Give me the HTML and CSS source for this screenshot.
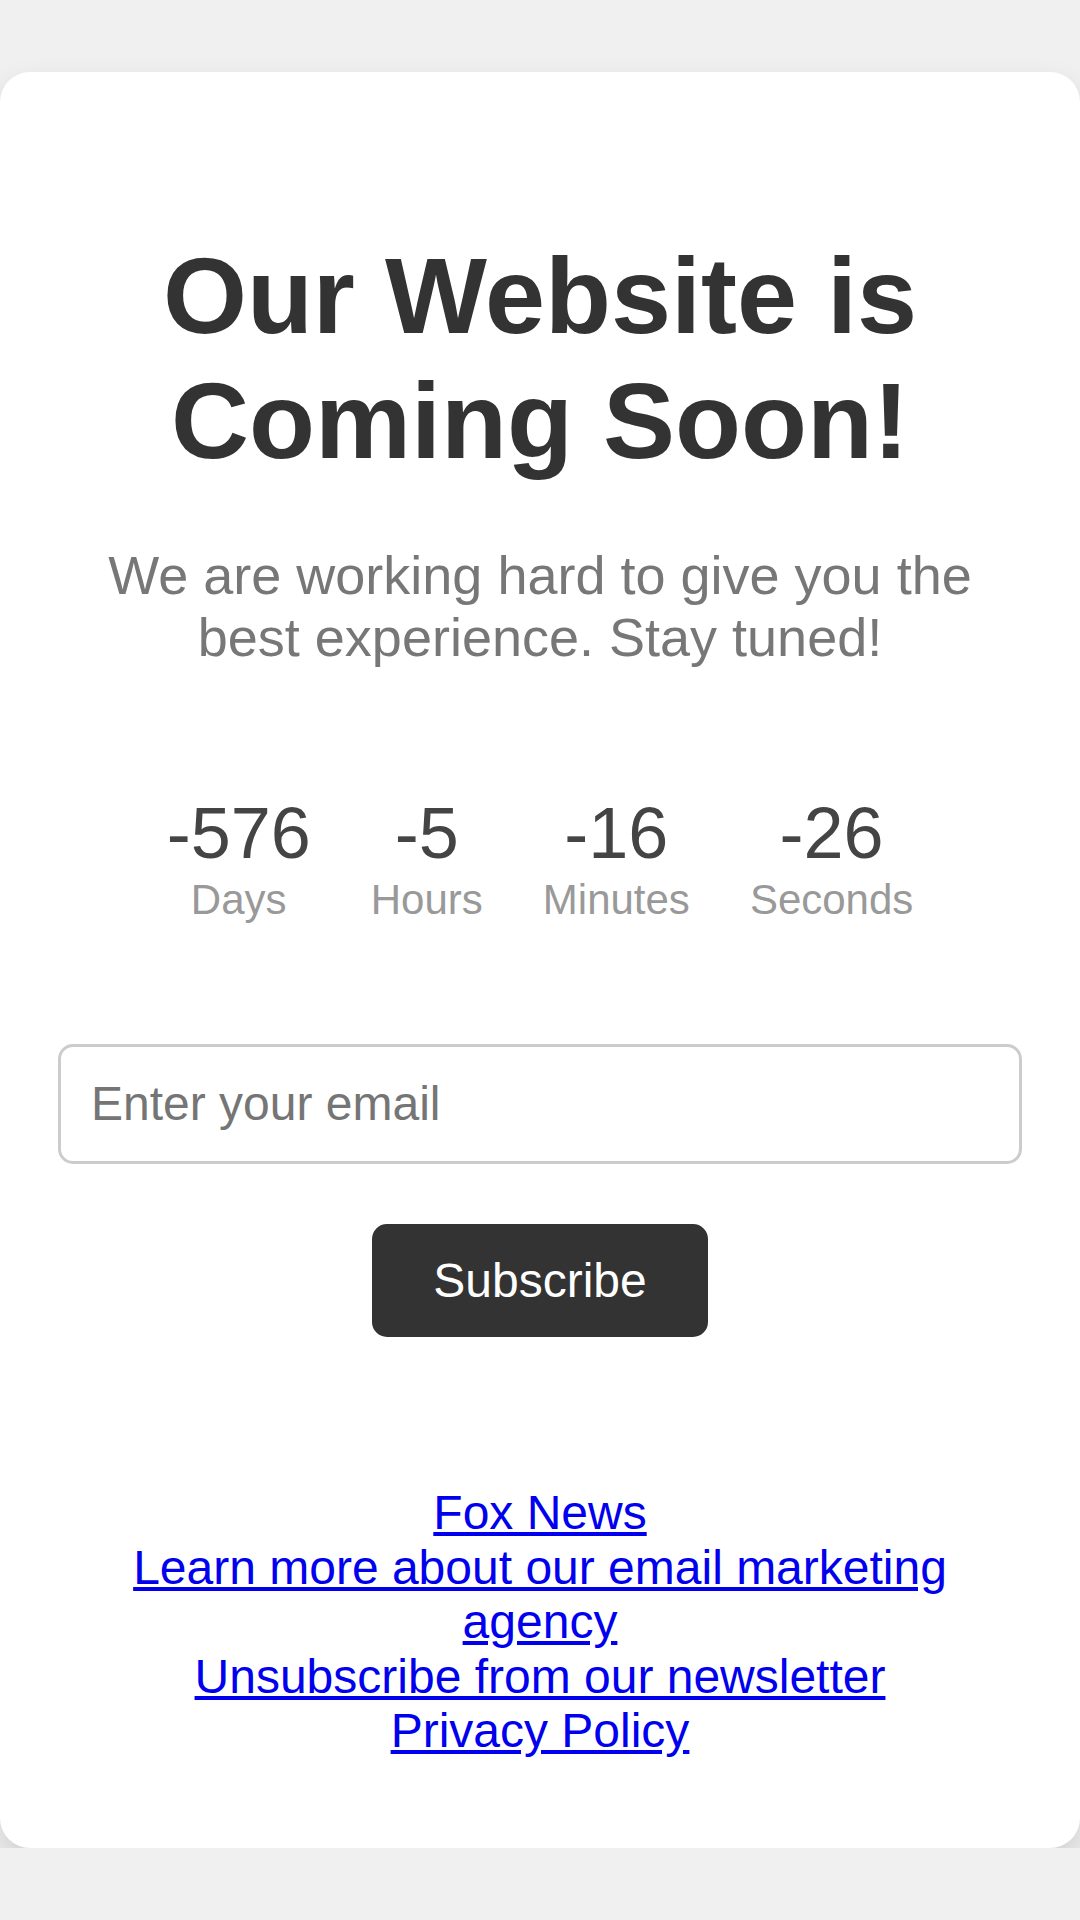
FILE: index.html
```html
<!DOCTYPE html>
<html lang="en">
<head>
  <meta charset="UTF-8">
  <title>Coming Soon</title>
  <meta name="viewport" content="width=device-width, initial-scale=1">
  <link rel="stylesheet" href="styles.css">
</head>
<body>
  <div class="container">
    <h1>Our Website is Coming Soon!</h1>
    <p class="subtitle">We are working hard to give you the best experience. Stay tuned!</p>

    <div class="countdown">
      <div class="count-item"><div class="count-num">-576</div><div class="count-label">Days</div></div>
      <div class="count-item"><div class="count-num">-5</div><div class="count-label">Hours</div></div>
      <div class="count-item"><div class="count-num">-16</div><div class="count-label">Minutes</div></div>
      <div class="count-item"><div class="count-num">-26</div><div class="count-label">Seconds</div></div>
    </div>

    <form class="subscribe" onsubmit="return false;">
      <input type="email" placeholder="Enter your email">
      <button type="submit">Subscribe</button>
    </form>

    <div class="links">
      <a href="#">Fox News</a>
      <a href="#">Learn more about our email marketing agency</a>
      <a href="#">Unsubscribe from our newsletter</a>
      <a href="#">Privacy Policy</a>
    </div>
  </div>
</body>
</html>
```

FILE: styles.css
```css
body { margin:0; padding-top:72px; background:#f0f0f0; font-family:"Liberation Sans", Arial, sans-serif; }
.container { background:#fff; border-radius:30px; padding:90px 58px 89px; box-shadow:0 14px 30px rgba(0,0,0,0.14); text-align:center; }
h1 { font-size:108px; line-height:125px; margin:71px 0 61px; color:#333; }
.subtitle { font-size:54px; color:#777; margin:0 0 124px; }
.countdown { display:flex; justify-content:center; gap:60px; margin-bottom:120px; }
.count-num { font-size:72px; color:#444; }
.count-label { font-size:42px; color:#999; margin-top:2px; }
.subscribe { margin:0; }
.subscribe input { display:block; width:100%; box-sizing:border-box; font-family:inherit; font-size:48px; padding:29px 30px 30px; border:3px solid #ccc; border-radius:15px; margin:0 0 60px; outline:none; }
.subscribe input::placeholder { color:#757575; }
.subscribe button { background:#333; color:#fff; border:none; font-family:inherit; font-size:48px; padding:29px 61px; border-radius:15px; cursor:pointer; }
.links { margin-top:149px; font-size:48px; line-height:54.5px; }
.links a { display:block; color:#0000ee; }
```
